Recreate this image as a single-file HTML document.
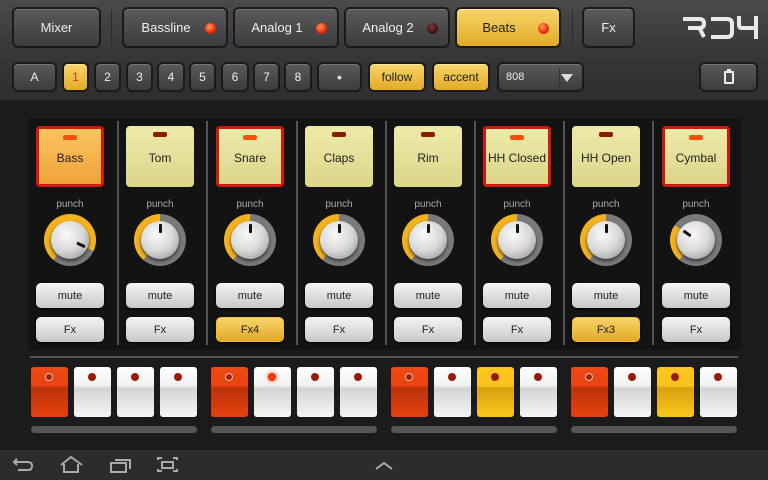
<!DOCTYPE html>
<html><head><meta charset="utf-8"><style>
*{box-sizing:border-box;margin:0;padding:0}
body{width:768px;height:480px;overflow:hidden;background:#0e0e0e;font-family:"Liberation Sans",sans-serif;position:relative}
.top{position:absolute;left:0;top:0;width:768px;height:100px;background:linear-gradient(#4a4a4a,#353535 60%,#2e2e2e)}
.b{position:absolute;border-radius:6px;background:linear-gradient(#5a5a5a,#3c3c3c);border:2px solid #1a1a1a;box-shadow:inset 0 1px 0 #777;color:#eee;font-size:13px;display:flex;align-items:center;justify-content:center}
.y{background:linear-gradient(#f7d56a,#e3ab25);color:#222;box-shadow:inset 0 1px 0 #ffe9a0}
.led{position:absolute;width:11px;height:11px;border-radius:50%;background:radial-gradient(circle at 40% 35%,#ff9a60,#f02a00 60%,#a00);top:14px;right:10px}
.led.off{background:radial-gradient(circle at 40% 35%,#7a3a3a,#3a0d0d 70%)}
.main{position:absolute;left:0;top:100px;width:768px;height:350px;background:#1b1b1b}
.panel{position:absolute;left:28px;top:118px;width:713px;height:232px;background:#131313}
.div{position:absolute;top:121px;width:2px;height:224px;background:#555}
.pad{position:absolute;top:126px;width:68px;height:61px;border-radius:4px;background:linear-gradient(#eeeaa8,#dcd58a);display:flex;align-items:center;justify-content:center;font-size:12px;color:#222;padding-top:2px}
.pad.r{border:3px solid #d01a10}
.pad.o{background:linear-gradient(#fbc560,#f0a23a)}
.pad i{position:absolute;top:6px;left:27px;width:14px;height:5px;border-radius:2px;background:#8a1a0a}
.pad.r i{background:#ff4a10;left:24px}
.pl{position:absolute;top:199px;width:68px;text-align:center;font-size:10px;color:#aaa}
.kn{position:absolute;top:214px;width:52px;height:52px;border-radius:50%}
.kn b{position:absolute;left:7px;top:7px;width:38px;height:38px;border-radius:50%;background:radial-gradient(circle at 40% 35%,#fafafa,#d8d8d8 50%,#8a8a8a);box-shadow:0 2px 3px #333}
.kn b s{position:absolute;left:18px;top:3px;width:3px;height:9px;background:#111;border-radius:1px;transform-origin:1.5px 16px}
.w{position:absolute;width:68px;height:25px;border-radius:5px;background:linear-gradient(#f5f5f5,#c8c8c8);font-size:11px;color:#222;display:flex;align-items:center;justify-content:center;box-shadow:0 1px 2px #000}
.w.y{background:linear-gradient(#f8d46a,#e4a825);border:1px solid #f6c030}
.sep{position:absolute;left:30px;top:356px;width:708px;height:2px;background:#555}
.st{position:absolute;top:367px;width:37px;height:50px;border-radius:3px;background:linear-gradient(#fff,#f0f0f0 38%,#d4d4d4 42%,#f6f6f6)}
.st.o{background:linear-gradient(#ee4a14,#e84210 38%,#b8320c 42%,#e8420f)}
.st.g{background:linear-gradient(#fdc620,#fac21c 38%,#d8a010 42%,#fbc81e)}
.st i{position:absolute;left:14px;top:6px;width:8px;height:8px;border-radius:50%;background:#9a1a08}
.st.o i{border:1px solid #f3c0a0;background:#a02010}
.st.l i{background:radial-gradient(#ff5020,#e01000);box-shadow:0 0 4px #f40}
.bar{position:absolute;top:426px;height:7px;border-radius:4px;background:#555}
.nav{position:absolute;left:0;top:450px;width:768px;height:30px;background:#2c2c2c}
</style></head><body>
<div class="top"></div>
<div class="b" style="left:12px;top:7px;width:89px;height:41px">Mixer</div>
<div style="position:absolute;left:111px;top:10px;width:1px;height:36px;background:#2a2a2a"></div>
<div class="b" style="left:122px;top:7px;width:106px;height:41px;padding-right:18px">Bassline<span class="led"></span></div>
<div class="b" style="left:233px;top:7px;width:106px;height:41px;padding-right:18px">Analog 1<span class="led"></span></div>
<div class="b" style="left:344px;top:7px;width:106px;height:41px;padding-right:18px">Analog 2<span class="led off"></span></div>
<div class="b y" style="left:455px;top:7px;width:106px;height:41px;padding-right:18px">Beats<span class="led"></span></div>
<div style="position:absolute;left:572px;top:10px;width:1px;height:36px;background:#2a2a2a"></div>
<div class="b" style="left:582px;top:7px;width:53px;height:41px">Fx</div>
<svg style="position:absolute;left:0;top:0" width="768" height="60"><g fill="none" stroke="#e8e8e8" stroke-width="4"><path d="M683 19H699Q704 19 704 23.5Q704 28 699 28H688M700 29L704 37"/><path d="M711 19H727Q732 19 732 24V32Q732 37 727 37H711"/><path d="M739 16V25Q739 28 742 28H756M756 16V39"/></g></svg>
<div class="b" style="left:12px;top:62px;width:45px;height:30px;font-size:12px">A</div>
<div class="b y" style="left:62px;top:62px;width:27px;height:30px;font-size:12px;color:#e03010">1</div>
<div class="b" style="left:94px;top:62px;width:27px;height:30px;font-size:12px">2</div>
<div class="b" style="left:126px;top:62px;width:27px;height:30px;font-size:12px">3</div>
<div class="b" style="left:157px;top:62px;width:28px;height:30px;font-size:12px">4</div>
<div class="b" style="left:189px;top:62px;width:27px;height:30px;font-size:12px">5</div>
<div class="b" style="left:221px;top:62px;width:28px;height:30px;font-size:12px">6</div>
<div class="b" style="left:253px;top:62px;width:27px;height:30px;font-size:12px">7</div>
<div class="b" style="left:284px;top:62px;width:28px;height:30px;font-size:12px">8</div>
<div class="b" style="left:317px;top:62px;width:45px;height:30px;font-size:14px">•</div>
<div class="b y" style="left:368px;top:62px;width:58px;height:30px;font-size:12px">follow</div>
<div class="b y" style="left:432px;top:62px;width:58px;height:30px;font-size:12px">accent</div>
<div class="b" style="left:497px;top:62px;width:87px;height:30px;font-size:11px;justify-content:flex-start;padding-left:7px">808<span style="position:absolute;left:60px;top:4px;width:1px;height:20px;background:#333"></span><span style="position:absolute;right:9px;top:10px;border-left:6px solid transparent;border-right:6px solid transparent;border-top:8px solid #ddd"></span></div>
<div class="b" style="left:699px;top:62px;width:59px;height:30px"><span style="width:10px;height:13px;border:2px solid #eee;border-radius:1px;position:relative"><span style="position:absolute;left:1px;top:-4px;width:4px;height:3px;background:#eee"></span></span></div>
<div class="main"></div>
<div class="panel"></div>
<div class="div" style="left:117px"></div><div class="div" style="left:206px"></div><div class="div" style="left:296px"></div><div class="div" style="left:385px"></div><div class="div" style="left:474px"></div><div class="div" style="left:563px"></div><div class="div" style="left:652px"></div>

<div class="pad r o" style="left:36px"><i></i>Bass</div>
<div class="pad" style="left:126px"><i></i>Tom</div>
<div class="pad r" style="left:216px"><i></i>Snare</div>
<div class="pad" style="left:305px"><i></i>Claps</div>
<div class="pad" style="left:394px"><i></i>Rim</div>
<div class="pad r" style="left:483px"><i></i>HH Closed</div>
<div class="pad" style="left:572px"><i></i>HH Open</div>
<div class="pad r" style="left:662px"><i></i>Cymbal</div>

<div class="pl" style="left:36px">punch</div><div class="pl" style="left:126px">punch</div><div class="pl" style="left:216px">punch</div><div class="pl" style="left:305px">punch</div><div class="pl" style="left:394px">punch</div><div class="pl" style="left:483px">punch</div><div class="pl" style="left:572px">punch</div><div class="pl" style="left:662px">punch</div>

<div class="kn" style="left:44px;background:conic-gradient(from 220deg,#f2b21e 0 255deg,#7a7a7a 255deg)"><b><s style="transform:rotate(115deg)"></s></b></div>
<div class="kn" style="left:134px;background:conic-gradient(from 220deg,#f2b21e 0 140deg,#7a7a7a 140deg)"><b><s></s></b></div>
<div class="kn" style="left:224px;background:conic-gradient(from 220deg,#f2b21e 0 140deg,#7a7a7a 140deg)"><b><s></s></b></div>
<div class="kn" style="left:313px;background:conic-gradient(from 220deg,#f2b21e 0 140deg,#7a7a7a 140deg)"><b><s></s></b></div>
<div class="kn" style="left:402px;background:conic-gradient(from 220deg,#f2b21e 0 140deg,#7a7a7a 140deg)"><b><s></s></b></div>
<div class="kn" style="left:491px;background:conic-gradient(from 220deg,#f2b21e 0 140deg,#7a7a7a 140deg)"><b><s></s></b></div>
<div class="kn" style="left:580px;background:conic-gradient(from 220deg,#f2b21e 0 140deg,#7a7a7a 140deg)"><b><s></s></b></div>
<div class="kn" style="left:670px;background:conic-gradient(from 220deg,#f2b21e 0 85deg,#7a7a7a 85deg)"><b><s style="transform:rotate(-55deg)"></s></b></div>

<div class="w" style="left:36px;top:283px">mute</div><div class="w" style="left:126px;top:283px">mute</div><div class="w" style="left:216px;top:283px">mute</div><div class="w" style="left:305px;top:283px">mute</div><div class="w" style="left:394px;top:283px">mute</div><div class="w" style="left:483px;top:283px">mute</div><div class="w" style="left:572px;top:283px">mute</div><div class="w" style="left:662px;top:283px">mute</div>
<div class="w" style="left:36px;top:317px">Fx</div><div class="w" style="left:126px;top:317px">Fx</div><div class="w y" style="left:216px;top:317px">Fx4</div><div class="w" style="left:305px;top:317px">Fx</div><div class="w" style="left:394px;top:317px">Fx</div><div class="w" style="left:483px;top:317px">Fx</div><div class="w y" style="left:572px;top:317px">Fx3</div><div class="w" style="left:662px;top:317px">Fx</div>

<div class="sep"></div>
<div class="st o" style="left:31px"><i></i></div><div class="st" style="left:74px"><i></i></div><div class="st" style="left:117px"><i></i></div><div class="st" style="left:160px"><i></i></div>
<div class="st o" style="left:211px"><i></i></div><div class="st l" style="left:254px"><i></i></div><div class="st" style="left:297px"><i></i></div><div class="st" style="left:340px"><i></i></div>
<div class="st o" style="left:391px"><i></i></div><div class="st" style="left:434px"><i></i></div><div class="st g" style="left:477px"><i></i></div><div class="st" style="left:520px"><i></i></div>
<div class="st o" style="left:571px"><i></i></div><div class="st" style="left:614px"><i></i></div><div class="st g" style="left:657px"><i></i></div><div class="st" style="left:700px"><i></i></div>
<div class="bar" style="left:31px;width:166px"></div><div class="bar" style="left:211px;width:166px"></div><div class="bar" style="left:391px;width:166px"></div><div class="bar" style="left:571px;width:166px"></div>

<div class="nav"></div>
<svg style="position:absolute;left:0;top:450px" width="768" height="30"><g fill="none" stroke="#aaa" stroke-width="2"><path d="M17 9L14 12L17 15M14 12H28Q32 12 32 16Q32 20 28 20H18"/><path d="M61 15L71 7L82 15M64 14V22H78V14"/><path d="M111 13H126V22H111ZM115 10H130V19"/><path d="M158 10V8H162M173 8H177V10M177 19V21H173M162 21H158V19M162 12H173V18H162Z"/><path d="M376 19L384 13L392 19"/></g></svg>
</body></html>
